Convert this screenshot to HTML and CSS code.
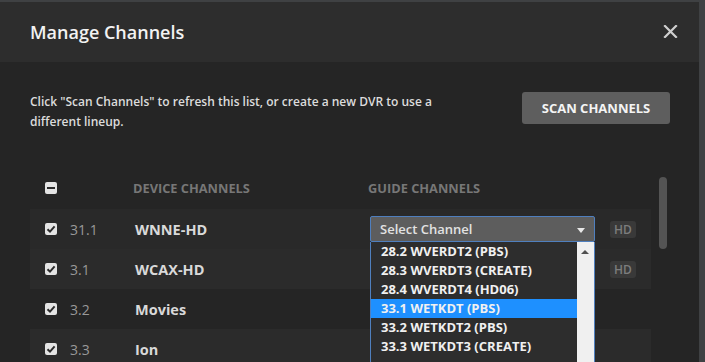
FILE: index.html
```html
<!DOCTYPE html>
<html lang="en">
<head>
    <meta charset="UTF-8">
    <title>Manage Channels</title>
    <link rel="stylesheet" href="styles.css">
</head>
<body>
    <!-- Modal -->
    <div class="modal">
        <div class="modal-header">
            <h2 class="modal-title">Manage Channels</h2>
            <button class="close-btn" aria-label="Close">
                <svg width="15" height="13" viewBox="0 0 15 13">
                    <path d="M2 1 L13 12 M13 1 L2 12" stroke="#cfcfcf" stroke-width="2.2" stroke-linecap="square"/>
                </svg>
            </button>
        </div>

        <div class="modal-body">
            <div class="intro">
                <p class="intro-text">Click "Scan Channels" to refresh this list, or create a new DVR to use a different lineup.</p>
                <button class="scan-btn">SCAN CHANNELS</button>
            </div>

            <div class="channel-table">
                <div class="table-head">
                    <span class="check minus"><i></i></span>
                    <span></span>
                    <span class="head-label">DEVICE CHANNELS</span>
                    <span class="head-label">GUIDE CHANNELS</span>
                    <span></span>
                </div>

                <div class="table-row row-hover">
                    <span class="check"><svg viewBox="0 0 12 12"><path d="M2.5 6.2 L5 8.6 L9.6 3.4" stroke="#2b2b2b" stroke-width="2" fill="none"/></svg></span>
                    <span class="ch-num">31.1</span>
                    <span class="ch-name">WNNE-HD</span>
                    <div class="select-wrap">
                        <div class="select open">Select Channel<span class="caret"></span></div>
                        <ul class="select-list">
                            <li>28.2 WVERDT2 (PBS)</li>
                            <li>28.3 WVERDT3 (CREATE)</li>
                            <li>28.4 WVERDT4 (HD06)</li>
                            <li class="active">33.1 WETKDT (PBS)</li>
                            <li>33.2 WETKDT2 (PBS)</li>
                            <li>33.3 WETKDT3 (CREATE)</li>
                        </ul>
                    </div>
                    <span class="hd">HD</span>
                </div>

                <!-- rows below sit under the open list, so their selects show no label -->
                <div class="table-row row-alt">
                    <span class="check"><svg viewBox="0 0 12 12"><path d="M2.5 6.2 L5 8.6 L9.6 3.4" stroke="#2b2b2b" stroke-width="2" fill="none"/></svg></span>
                    <span class="ch-num">3.1</span>
                    <span class="ch-name">WCAX-HD</span>
                    <div class="select"></div>
                    <span class="hd">HD</span>
                </div>

                <div class="table-row">
                    <span class="check"><svg viewBox="0 0 12 12"><path d="M2.5 6.2 L5 8.6 L9.6 3.4" stroke="#2b2b2b" stroke-width="2" fill="none"/></svg></span>
                    <span class="ch-num">3.2</span>
                    <span class="ch-name">Movies</span>
                    <div class="select"></div>
                    <span></span>
                </div>

                <div class="table-row row-alt">
                    <span class="check"><svg viewBox="0 0 12 12"><path d="M2.5 6.2 L5 8.6 L9.6 3.4" stroke="#2b2b2b" stroke-width="2" fill="none"/></svg></span>
                    <span class="ch-num">3.3</span>
                    <span class="ch-name">Ion</span>
                    <div class="select"></div>
                    <span></span>
                </div>

                <div class="scrollbar"></div>
            </div>
        </div>
    </div>
</body>
</html>
```

FILE: styles.css
```css
/* Reset and Base Styles */
* {
    margin: 0;
    padding: 0;
    box-sizing: border-box;
}

body {
    font-family: 'Open Sans', sans-serif;
    background-color: #3f4143;
    color: #e6e6e6;
    height: 362px;
    overflow: hidden;
}

/* Modal */
.modal {
    margin-top: 2px;
    width: 699px;
    height: 360px;
    background-color: #252525;
    overflow: hidden;
}

.modal-header {
    height: 60px;
    background-color: #2d2d2d;
    padding: 0 21px 0 30px;
    display: flex;
    justify-content: space-between;
    align-items: center;
}

.modal-title {
    font-size: 18px;
    font-weight: 600;
    color: #f2f2f2;
    margin-top: -1px;
}

.close-btn {
    background: none;
    border: none;
    width: 15px;
    height: 13px;
    display: flex;
    margin-top: -1px;
}

.modal-body {
    padding: 30px 29px 0 30px;
}

/* Intro */
.intro {
    display: flex;
    justify-content: space-between;
    align-items: flex-start;
}

.intro-text {
    width: 420px;
    font-size: 12px;
    font-weight: 600;
    line-height: 20px;
    color: #dcdcdc;
}

.scan-btn {
    width: 148px;
    height: 32px;
    background-color: #5e5e5e;
    border: none;
    border-radius: 3px;
    color: #f4f4f4;
    font-family: 'Open Sans', sans-serif;
    font-size: 13px;
    font-weight: 700;
}

/* Channel Table */
.channel-table {
    position: relative;
    margin-top: 38px;
    width: 621px;
}

.table-head,
.table-row {
    display: grid;
    grid-template-columns: 25px 65px 235px 225px 1fr;
    align-items: center;
    padding-left: 15px;
}

.table-head {
    height: 39px;
    padding-bottom: 4px;
}

.table-row {
    height: 40px;
}

.row-hover {
    background-color: #292929;
}

.row-alt {
    background-color: #2b2b2b;
}

.head-label {
    font-size: 12.8px;
    font-weight: 700;
    color: #777777;
    margin-left: -2px;
}

.check {
    width: 12px;
    height: 12px;
    background-color: #e4e4e4;
    border-radius: 2px;
    display: flex;
    align-items: center;
    justify-content: center;
}

.check svg {
    width: 12px;
    height: 12px;
}

.check.minus i {
    display: block;
    width: 8px;
    height: 2px;
    background-color: #2b2b2b;
}

.ch-num {
    font-size: 14px;
    color: #999999;
}

.ch-name {
    font-size: 14.5px;
    font-weight: 700;
    color: #d9d9d9;
}

/* Select */
.select-wrap {
    position: relative;
}

.select {
    position: relative;
    height: 26px;
    background-color: #5d5d5d;
    border: 1px solid #5d5d5d;
    border-radius: 2px;
    padding-left: 9px;
    font-size: 13px;
    font-weight: 600;
    line-height: 24px;
    color: #e2e2e2;
}

.select.open {
    border-color: #4f7fbe;
}

.caret {
    position: absolute;
    right: 9px;
    top: 11px;
    border-left: 4px solid transparent;
    border-right: 4px solid transparent;
    border-top: 5px solid #e8e8e8;
}

.select-list {
    position: absolute;
    top: 26px;
    left: 0;
    width: 225px;
    height: 130px;
    list-style: none;
    background-color: #2d2d2d;
    border: 1px solid #4f7fbe;
    border-top: none;
    padding-right: 17px;
    z-index: 5;
}

.select-list::after {
    content: '';
    position: absolute;
    top: 0;
    right: 0;
    width: 17px;
    height: 100%;
    background-color: #f0f0f0;
}

.select-list::before {
    content: '';
    position: absolute;
    top: 8px;
    right: 5px;
    border-left: 4px solid transparent;
    border-right: 4px solid transparent;
    border-bottom: 4px solid #505050;
    z-index: 1;
}

.select-list li {
    height: 19px;
    padding-left: 10px;
    font-size: 13px;
    font-weight: 700;
    line-height: 19px;
    color: #f0f0f0;
}

.select-list li.active {
    background-color: #1e90ff;
}

.hd {
    justify-self: start;
    margin-left: 15px;
    height: 17px;
    padding: 0 4px;
    background-color: #393939;
    border-radius: 3px;
    font-size: 12px;
    font-weight: 600;
    line-height: 17px;
    color: #7d7d7d;
}

.scrollbar {
    position: absolute;
    top: 7px;
    left: 629px;
    width: 8px;
    height: 72px;
    background-color: #545454;
    border-radius: 4px;
}
```
